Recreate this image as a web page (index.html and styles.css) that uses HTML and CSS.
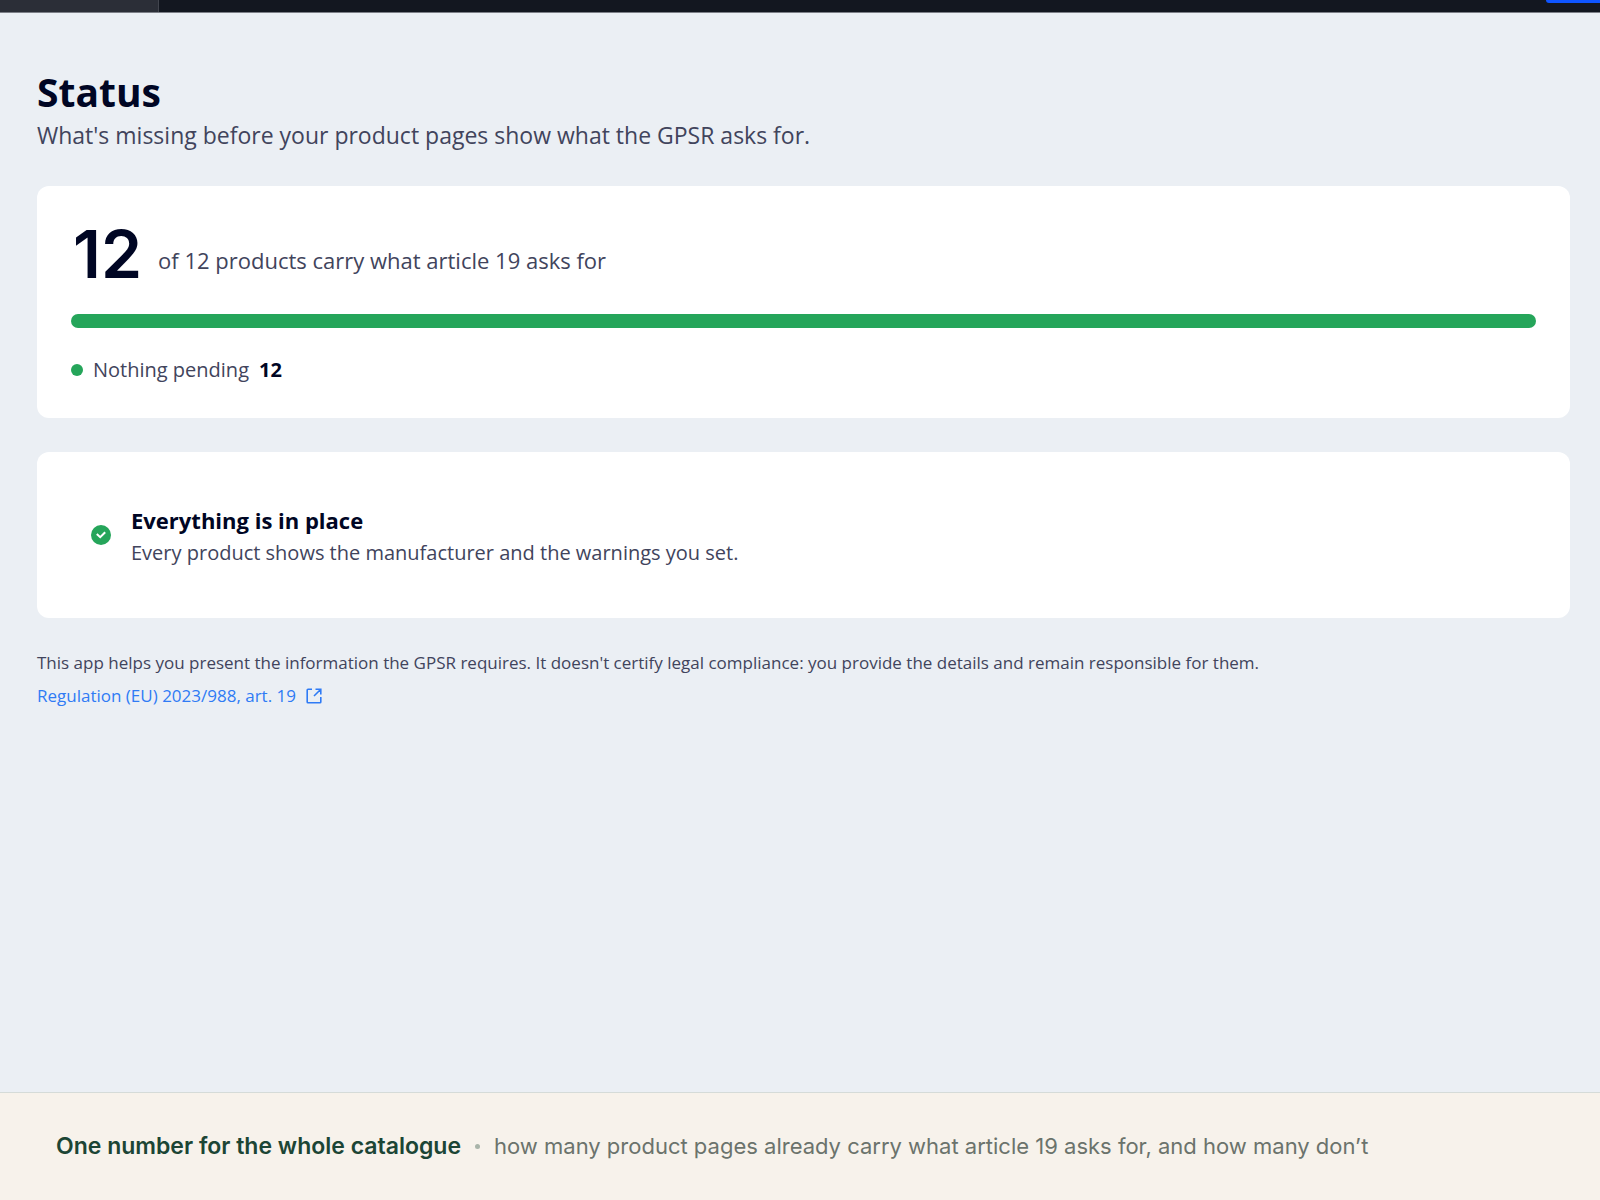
FILE: index.html
```html
<!doctype html>
<html lang="en">

<head>
  <meta charset="utf-8">
  <meta name="viewport" content="width=device-width, initial-scale=1">
  <title>Status</title>
  <link rel="stylesheet" href="styles.css">
</head>

<body>
  <header class="topbar">
    <div class="topbar-tab"></div>
    <div class="topbar-action"></div>
  </header>

  <main class="page">
    <h1>Status</h1>
    <p class="subtitle">What's missing before your product pages show what the GPSR asks for.</p>

    <section class="card summary">
      <div class="count">
        <b class="count-number">12</b>
        <span class="count-label">of 12 products carry what article 19 asks for</span>
      </div>
      <div class="bar"></div>
      <div class="legend">
        <span class="dot"></span>
        <span>Nothing pending</span>
        <b>12</b>
      </div>
    </section>

    <section class="card message">
      <svg class="check" viewBox="0 0 20 20">
        <circle cx="10" cy="10" r="10" fill="#25a55a" />
        <path d="M5.8 9l3.4 3.2 5-5" fill="none" stroke="#fff" stroke-width="2" />
      </svg>
      <div>
        <h2>Everything is in place</h2>
        <p>Every product shows the manufacturer and the warnings you set.</p>
      </div>
    </section>

    <p class="note">This app helps you present the information the GPSR requires. It doesn't certify legal compliance: you provide the details and remain responsible for them.</p>
    <a class="source" href="#">
      Regulation (EU) 2023/988, art. 19
      <svg viewBox="0 0 16 16" fill="none" stroke="currentColor" stroke-width="1.6">
        <path d="M6 1.2H2Q1.2 1.2 1.2 2V14Q1.2 14.8 2 14.8H14Q14.8 14.8 14.8 14V9M9.5 1.2h5.3v5.3M14.8 1.2L8 8" />
      </svg>
    </a>
  </main>

  <footer class="caption">
    <b>One number for the whole catalogue</b>
    <span class="caption-dot"></span>
    <span class="caption-text">how many product pages already carry what article 19 asks for, and how many don’t</span>
  </footer>
</body>

</html>
```

FILE: styles.css
```css
body {
  margin: 0;
  min-height: 100vh;
  display: flex;
  flex-direction: column;
  background: #ebeff4;
  color: #000624;
  font-family: "Open Sans", "Noto Sans", sans-serif;
}

h1, h2, p {
  margin: 0;
}

.topbar {
  display: flex;
  justify-content: space-between;
  height: 12px;
  background: #131720;
  border-bottom: 1px solid #7c7f87;
}

.topbar-tab {
  width: 158px;
  background: #2b2e37;
  border-right: 1px solid #42454e;
}

.topbar-action {
  width: 54px;
  height: 3px;
  background: #0f55ff;
  border-bottom-left-radius: 8px;
}

.page {
  flex: 1;
  padding: 54px 30px 32px 37px;
}

h1 {
  font-size: 39px;
  line-height: 50px;
}

.subtitle {
  font-size: 23px;
  line-height: 36px;
  color: #41445c;
}

.card {
  background: #fff;
  border-radius: 12px;
  padding: 34px;
}

.summary {
  margin-top: 33px;
}

.count {
  display: flex;
  align-items: center;
  gap: 16px;
}

.count-number {
  padding-left: 2px;
  font-family: Inter, sans-serif;
  font-size: 66px;
  font-weight: 600;
  line-height: 68px;
}

.count-label {
  padding-top: 12px;
  font-size: 22px;
  line-height: 32px;
  color: #41445c;
}

.bar {
  margin-top: 26px;
  height: 14px;
  border-radius: 7px;
  background: #25a55a;
}

.legend {
  display: flex;
  align-items: center;
  gap: 10px;
  margin-top: 28px;
  font-size: 20px;
  line-height: 28px;
  color: #41445c;
}

.legend b {
  color: #000624;
}

.dot {
  width: 12px;
  height: 12px;
  border-radius: 50%;
  background: #25a55a;
}

.message {
  display: flex;
  align-items: center;
  gap: 20px;
  margin-top: 34px;
  padding: 50px 54px;
}

.check {
  width: 20px;
  height: 20px;
}

h2 {
  font-size: 22px;
  line-height: 36px;
}

.message p {
  font-size: 20px;
  line-height: 30px;
  color: #41445c;
}

.note {
  margin-top: 28px;
  font-size: 17px;
  line-height: 34px;
  color: #41445c;
}

.source {
  display: inline-flex;
  align-items: center;
  gap: 10px;
  font-size: 17px;
  line-height: 32px;
  color: #2f7bf5;
  text-decoration: none;
}

.source svg {
  width: 16px;
  height: 16px;
}

.caption {
  display: flex;
  align-items: center;
  gap: 14px;
  padding: 36px 56px;
  border-top: 1px solid #d5dbd8;
  background: #f7f2eb;
  color: #6b736c;
  font-family: Inter, sans-serif;
  font-size: 23px;
  line-height: 35px;
}

.caption b {
  color: #1c4535;
  font-weight: 600;
}

.caption-text {
  font-size: 22px;
}

.caption-dot {
  width: 5px;
  height: 5px;
  border-radius: 50%;
  background: #a9b4a9;
}
```
